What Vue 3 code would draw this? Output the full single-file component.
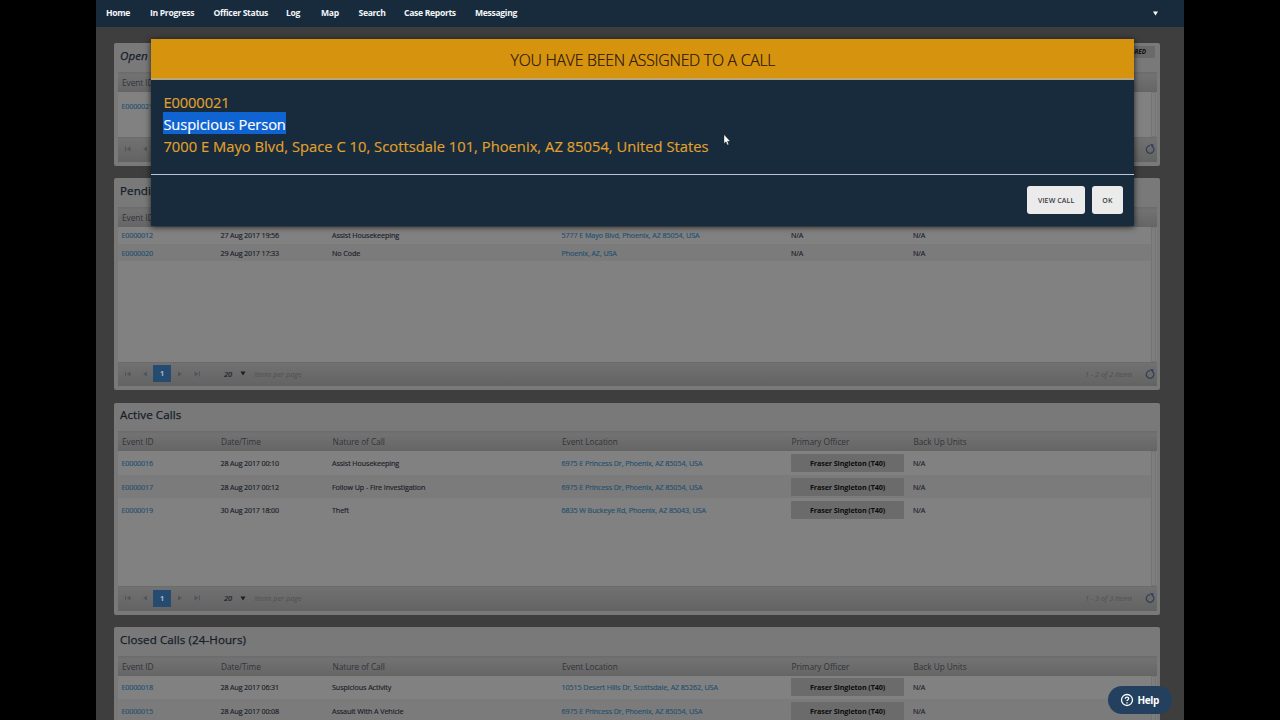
<script setup>
import { ref } from "vue";

const links = [
  { label: "Home", width: 24 },
  { label: "In Progress", width: 43.5 },
  { label: "Officer Status", width: 52.5 },
  { label: "Log", width: 15 },
  { label: "Map", width: 17.5 },
  { label: "Search", width: 25.5 },
  { label: "Case Reports", width: 51 },
  { label: "Messaging", width: 42 },
];

const columns = ["Event ID", "Date/Time", "Nature of Call", "Event Location", "Primary Officer", "Back Up Units"];
const officer = "Fraser Singleton (T40)";

const panels = [
  {
    key: "open",
    title: "Open",
    total: "",
    pager: true,
    rows: [
      { id: "E0000021", date: "", nature: "", location: "", officer: "", backup: "" },
    ],
  },
  {
    key: "pending",
    title: "Pending",
    total: "1 - 2 of 2 items",
    pager: true,
    rows: [
      { id: "E0000012", date: "27 Aug 2017 19:56", nature: "Assist Housekeeping", location: "5777 E Mayo Blvd, Phoenix, AZ 85054, USA", officer: "", backup: "N/A" },
      { id: "E0000020", date: "29 Aug 2017 17:33", nature: "No Code", location: "Phoenix, AZ, USA", officer: "", backup: "N/A" },
    ],
  },
  {
    key: "active",
    title: "Active Calls",
    total: "1 - 3 of 3 items",
    pager: true,
    rows: [
      { id: "E0000016", date: "28 Aug 2017 00:10", nature: "Assist Housekeeping", location: "6975 E Princess Dr, Phoenix, AZ 85054, USA", officer, backup: "N/A" },
      { id: "E0000017", date: "28 Aug 2017 00:12", nature: "Follow Up - Fire Investigation", location: "6975 E Princess Dr, Phoenix, AZ 85054, USA", officer, backup: "N/A" },
      { id: "E0000019", date: "30 Aug 2017 18:00", nature: "Theft", location: "6835 W Buckeye Rd, Phoenix, AZ 85043, USA", officer, backup: "N/A" },
    ],
  },
  {
    key: "closed",
    title: "Closed Calls (24-Hours)",
    total: "",
    pager: false,
    rows: [
      { id: "E0000018", date: "28 Aug 2017 06:31", nature: "Suspicious Activity", location: "10515 Desert Hills Dr, Scottsdale, AZ 85262, USA", officer, backup: "N/A" },
      { id: "E0000015", date: "28 Aug 2017 00:08", nature: "Assault With A Vehicle", location: "6975 E Princess Dr, Phoenix, AZ 85054, USA", officer, backup: "N/A" },
    ],
  },
];

const showAlert = ref(true);

function closeAlert() {
  showAlert.value = false;
}
</script>

<template>
  <div class="page">
    <nav class="nav">
      <a v-for="link in links" :key="link.label" :style="{ width: link.width + 'px' }">{{ link.label }}</a>
      <svg class="caret" viewBox="0 0 6 5"><path d="M0 0H6L3 5Z" /></svg>
    </nav>

    <main class="content">
      <section v-for="panel in panels" :key="panel.key" class="panel" :class="panel.key">
        <div class="panel-title">
          <h2>{{ panel.title }}</h2>
          <span v-if="panel.key === 'open'" class="tag">CLEARED</span>
        </div>
        <div class="row head">
          <span v-for="col in columns" :key="col">{{ col }}</span>
        </div>
        <div class="grid-body">
          <div class="rows">
            <div v-for="row in panel.rows" :key="row.id" class="row">
              <a class="id">{{ row.id }}</a>
              <span class="date">{{ row.date }}</span>
              <span>{{ row.nature }}</span>
              <a class="location">{{ row.location }}</a>
              <span v-if="row.officer" class="officer">{{ row.officer }}</span>
              <span v-else>{{ row.backup }}</span>
              <span>{{ row.backup }}</span>
            </div>
          </div>
          <div class="scrollbar"></div>
        </div>
        <div v-if="panel.pager" class="pager">
          <svg class="arrow" viewBox="0 0 8 8"><path d="M1 1.5H2V6.5H1ZM6.5 1.5V6.5L2.5 4Z" /></svg>
          <svg class="arrow" viewBox="0 0 8 8"><path d="M6 1.5V6.5L2 4Z" /></svg>
          <template v-if="panel.total">
            <b class="current">1</b>
            <svg class="arrow" viewBox="0 0 8 8"><path d="M2 1.5V6.5L6 4Z" /></svg>
            <svg class="arrow" viewBox="0 0 8 8"><path d="M6 1.5H7V6.5H6ZM1.5 1.5V6.5L5.5 4Z" /></svg>
            <i class="size">20</i>
            <svg class="drop" viewBox="0 0 5 5"><path d="M0 0.5H5L2.5 4.5Z" /></svg>
            <i class="per-page">items per page</i>
          </template>
          <i class="total">{{ panel.total }}</i>
          <svg class="refresh" viewBox="0 0 10 10">
            <path class="ring" d="M7.9 2.9A3.8 3.8 0 1 1 5 1.7" />
            <path class="tip" d="M5 0L8.6 0.6L7.6 4Z" />
          </svg>
        </div>
      </section>
    </main>

    <div v-if="showAlert" class="alert">
      <header>YOU HAVE BEEN ASSIGNED TO A CALL</header>
      <div class="details">
        <div class="event">E0000021</div>
        <div class="nature"><mark>Suspicious Person</mark></div>
        <div class="address">7000 E Mayo Blvd, Space C 10, Scottsdale 101, Phoenix, AZ 85054, United States</div>
      </div>
      <footer>
        <button class="view">VIEW CALL</button>
        <button class="ok" @click="closeAlert">OK</button>
      </footer>
    </div>

    <div class="help">
      <svg viewBox="0 0 14 14">
        <circle cx="7" cy="7" r="5.5" />
        <path d="M5.3 5.7C5.3 3.5 8.8 3.6 8.7 5.7C8.6 6.8 7 6.7 7 8" />
        <path d="M7 9.3V10.4" />
      </svg>
      Help
    </div>

    <svg class="cursor" viewBox="0 0 8 12">
      <path d="M1 0.5V9.6L3 7.8L4.3 11L5.8 10.4L4.5 7.3H7.2Z" />
    </svg>
  </div>
</template>

<style>
body {
  background: #000;
}
</style>

<style scoped>
.page {
  position: relative;
  width: 1088px;
  height: 720px;
  margin: 0 auto;
  overflow: hidden;
  background: #3e3e3e;
  color: #1b2029;
  font-family: "Open Sans", "Noto Sans", sans-serif;
}

.nav {
  display: flex;
  align-items: center;
  gap: 20px;
  box-sizing: border-box;
  height: 27px;
  padding: 0 26px 1px 10px;
  background: #172b3d;
}

.nav a {
  flex: none;
  color: #f3f6f8;
  font-size: 8.6px;
  font-weight: 700;
  letter-spacing: -0.32px;
  white-space: nowrap;
}

.caret {
  width: 5px;
  height: 5px;
  margin-left: auto;
  fill: #fff;
}

.content {
  display: flex;
  flex-direction: column;
  gap: 12.5px;
  padding: 16px 24px 0 18px;
}

.panel {
  display: flex;
  flex-direction: column;
  flex: none;
  box-sizing: border-box;
  height: 212px;
  padding: 0 3px 4px 4px;
  border-radius: 2px;
  background: #797979;
}

.open {
  height: 122.5px;
}

.panel-title {
  display: flex;
  align-items: flex-start;
  justify-content: space-between;
  flex: none;
  height: 28.7px;
}

h2 {
  margin: 3.5px 0 0 2px;
  color: #151d29;
  font-size: 11.6px;
  font-weight: 400;
  line-height: 18px;
  letter-spacing: 0.08px;
  -webkit-text-stroke: 0.25px #151d29;
}

.active h2 {
  margin-top: 3px;
}

.open h2 {
  font-style: italic;
}

.tag {
  box-sizing: border-box;
  width: 44px;
  height: 12px;
  margin: 3px 2px 0 0;
  padding-right: 9px;
  border-radius: 1px;
  background: #696969;
  color: #111;
  font-size: 6.3px;
  font-weight: 700;
  font-style: italic;
  line-height: 12px;
  text-align: right;
}

.row {
  display: grid;
  grid-template-columns: 99px 111.5px 229.5px 229.5px 122px 1fr;
  align-items: center;
  box-sizing: border-box;
  height: 23.6px;
  padding-left: 3.5px;
  font-size: 7.2px;
  letter-spacing: -0.1px;
  white-space: nowrap;
  -webkit-text-stroke: 0.15px;
}

.open .row {
  height: 28px;
}

.pending .row {
  height: 17.3px;
}

.row:nth-child(even) {
  background: #7b7b7b;
}

.row a {
  color: #24506f;
}

.row .id,
.row .date {
  letter-spacing: -0.18px;
}

.panel .row.head {
  flex: none;
  height: 20px;
  padding: 1px 0 0 4px;
  background: linear-gradient(#6b6b6b, #727272 15%, #656565);
  color: #31343a;
  font-size: 8.3px;
  letter-spacing: -0.06px;
  -webkit-text-stroke: 0;
}

.officer {
  width: 113px;
  height: 18px;
  border-radius: 1px;
  background: #6b6b6b;
  color: #0b0b0b;
  font-weight: 700;
  line-height: 18px;
  text-align: center;
  -webkit-text-stroke: 0;
}

.grid-body {
  display: flex;
  flex: 1;
  min-height: 0;
  background: #818181;
}

.rows {
  flex: 1;
}

.scrollbar {
  width: 3px;
  margin-right: 1px;
  border: 1px solid #747474;
  background: #7e7e7e;
}

.pager {
  display: flex;
  align-items: center;
  flex: none;
  box-sizing: border-box;
  height: 24.5px;
  padding: 0 2.5px 1px 6px;
  border-top: 1px solid #6b6b6b;
  background: linear-gradient(#717171, #636363);
  font-size: 7.3px;
}

.arrow {
  width: 8px;
  height: 8px;
  margin-right: 9px;
  fill: #4c5662;
}

.current {
  width: 18px;
  height: 17px;
  margin: 0 5px 0 -5px;
  background: #254c70;
  color: #a9b8c5;
  line-height: 17px;
  text-align: center;
}

.size {
  margin-left: 14px;
  -webkit-text-stroke: 0.2px;
}

.drop {
  width: 6px;
  height: 5px;
  margin: 0 8px;
  fill: #1c1c1c;
}

.per-page,
.total {
  color: #505050;
}

.total {
  margin: 0 12px 0 auto;
}

.refresh {
  width: 10px;
  height: 10px;
}

.ring {
  fill: none;
  stroke: #303d57;
  stroke-width: 1.2;
}

.tip {
  fill: #303d57;
}

.alert {
  position: absolute;
  top: 39px;
  left: 55.4px;
  width: 983px;
  height: 186.5px;
  background: #172b3d;
  box-shadow: 0 1px 6px rgba(0, 0, 0, 0.75);
}

header {
  height: 39px;
  border-bottom: 2px solid #b9a678;
  background: #d6940e;
  color: #26120c;
  font-size: 15.8px;
  font-weight: 300;
  line-height: 42.5px;
  text-align: center;
  letter-spacing: -0.25px;
  -webkit-text-stroke: 0.2px #26120c;
}

.details {
  box-sizing: border-box;
  height: 95px;
  padding: 11.5px 12px 0;
  border-bottom: 1px solid #bdc6d4;
  color: #e1a12c;
  font-size: 14.7px;
  line-height: 21.8px;
  letter-spacing: -0.1px;
  white-space: nowrap;
  -webkit-text-stroke: 0.15px;
}

.nature {
  height: 21.8px;
}

mark {
  display: inline-block;
  height: 22px;
  margin-top: -1.5px;
  background: #1064d2;
  color: #fff;
  line-height: 24.5px;
  vertical-align: top;
}

.address {
  padding-top: 0.6px;
  letter-spacing: 0.035px;
}

footer {
  display: flex;
  justify-content: flex-end;
  gap: 7px;
  padding: 11px 11.5px 0;
}

button {
  height: 28px;
  padding: 0;
  border: 0;
  border-radius: 3px;
  background: #ebebeb;
  color: #3b3b3b;
  font-family: inherit;
  font-size: 7px;
  font-weight: 600;
  letter-spacing: 0.1px;
}

.view {
  width: 57.5px;
}

.ok {
  width: 31px;
}

.help {
  position: absolute;
  top: 686px;
  left: 1012px;
  display: flex;
  align-items: center;
  gap: 3.5px;
  box-sizing: border-box;
  width: 64px;
  height: 28px;
  padding-left: 12px;
  border-radius: 14px;
  background: #23405f;
  color: #fff;
  font-size: 10px;
  font-weight: 700;
  letter-spacing: -0.4px;
}

.help svg {
  width: 14px;
  height: 14px;
  fill: none;
  stroke: #fff;
  stroke-width: 1.3;
}

.cursor {
  position: absolute;
  top: 134px;
  left: 627px;
  width: 8px;
  height: 12px;
  fill: #fff;
  stroke: #101a26;
  stroke-width: 0.4;
}
</style>
